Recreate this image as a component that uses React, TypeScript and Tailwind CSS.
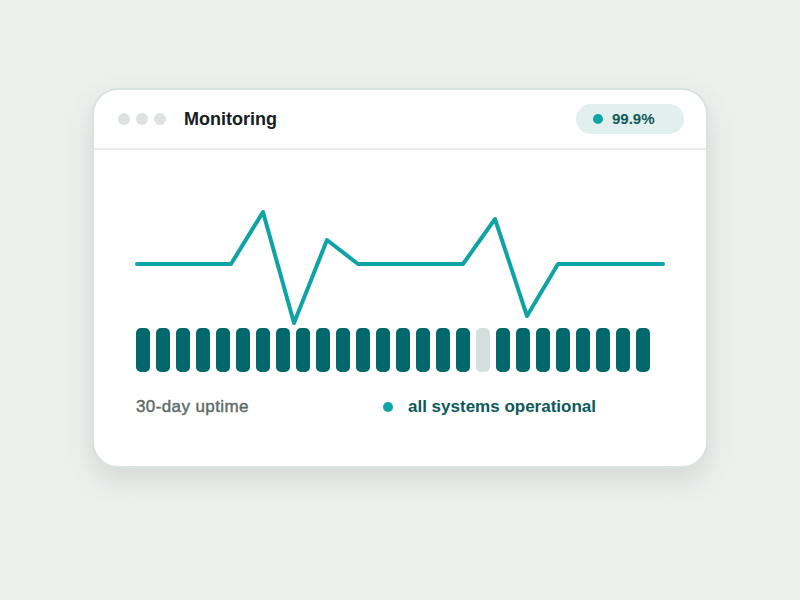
import React from "react";

const LINE_POINTS =
  "137,264 231,264 263,212 294,323 327,240 358,264 463,264 495,219 527,316 558,264 663,264";

// 26 daily uptime bars; one day had an incident
const DAYS = Array.from({ length: 26 }, (_, i) => i !== 17);

export default function App() {
  return (
    <div
      className="min-h-[600px] w-full bg-[#eef0ee] flex justify-center pt-[88px]"
      style={{ fontFamily: '"Liberation Sans", Arial, sans-serif' }}
    >
      <div className="w-[616px] h-[380px] rounded-[26px] border-2 border-[#d9e3e0] bg-white shadow-[0_12px_26px_rgba(70,100,90,0.16)] flex flex-col">
        {/* window header */}
        <div className="h-[60px] border-b-2 border-[#e8eceb] flex items-center pl-[24px] pr-[22px]">
          <div className="flex gap-[6px]">
            <span className="w-[12px] h-[12px] rounded-full bg-[#dee2e0]" />
            <span className="w-[12px] h-[12px] rounded-full bg-[#dee2e0]" />
            <span className="w-[12px] h-[12px] rounded-full bg-[#dee2e0]" />
          </div>
          <div className="ml-[18px] text-[18px] font-bold text-[#17201d]">Monitoring</div>
          <div className="ml-auto h-[30px] w-[108px] rounded-full bg-[#e1efee] flex items-center pl-[17px]">
            <span className="w-[10px] h-[10px] rounded-full bg-[#0ea5a5]" />
            <span className="ml-[9px] text-[15px] font-bold text-[#0f5959]">99.9%</span>
          </div>
        </div>

        {/* response time graph */}
        <div className="pl-[40px] pt-[50px]">
          <svg width="534" height="128" viewBox="134 200 534 128" className="block">
            <polyline
              points={LINE_POINTS}
              fill="none"
              stroke="#10a3a6"
              strokeWidth="4"
              strokeLinejoin="round"
              strokeLinecap="round"
            />
          </svg>
        </div>

        {/* uptime bars */}
        <div className="pl-[42px] flex gap-[6px]">
          {DAYS.map((ok, i) => (
            <div
              key={i}
              className={
                ok
                  ? "w-[14px] h-[44px] rounded-[5px] bg-[#02686b]"
                  : "w-[14px] h-[44px] rounded-[5px] bg-[#d3e0de]"
              }
            />
          ))}
        </div>

        {/* footer */}
        <div className="pl-[42px] mt-[25px] flex items-center h-[20px]">
          <span
            className="text-[17px] tracking-[0.4px] text-[#5f6b67] w-[247px]"
            style={{ WebkitTextStroke: "0.45px #5f6b67" }}
          >
            30-day uptime
          </span>
          <span className="w-[10px] h-[10px] rounded-full bg-[#0ea5a5]" />
          <span className="ml-[15px] text-[17px] font-bold text-[#0c5a5a]">all systems operational</span>
        </div>
      </div>
    </div>
  );
}
